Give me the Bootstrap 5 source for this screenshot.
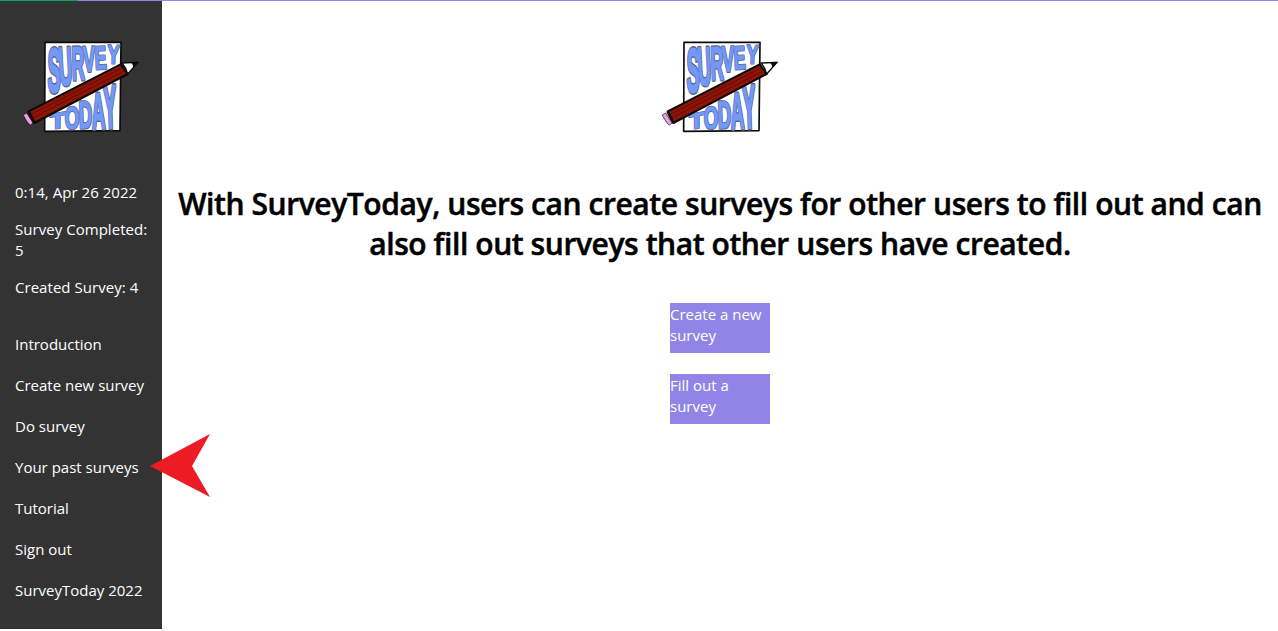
<!DOCTYPE html>
<html lang="en">
<head>
<meta charset="utf-8">
<meta name="viewport" content="width=device-width, initial-scale=1">
<title>SurveyToday</title>
<link href="https://cdn.jsdelivr.net/npm/bootstrap@5.3.0/dist/css/bootstrap.min.css" rel="stylesheet">
<style>
body{font-family:"Open Sans","Noto Sans",sans-serif;font-size:15px;line-height:21px;color:#000;overflow:hidden}
.load-track{height:1px;background:#9085e6}
.load-bar{height:1px;background:#04aa6d}
.shell{height:628px}
.side{width:162px;background:#333;color:#fff}
.brand{width:140px;height:110px;display:block}
.side .brand{margin:28.7px 0 0 11px}
.main-area{min-width:0}
.main-area .brand{margin-top:29.4px}
.stats{margin-top:42.3px;padding-left:15px;gap:16px;letter-spacing:.04px}
.menu{margin-top:36px;padding-left:15px;gap:20px}
.menu a{color:#fff;text-decoration:none;white-space:nowrap}
.headline{margin:43.6px 0 0;font-size:30px;line-height:40px;font-weight:600;white-space:nowrap;letter-spacing:-.42px;-webkit-text-stroke:.5px #000}
.actions{margin-top:39px;gap:21px}
.action{width:100px;height:50px;background:#9085e6;color:#fff;text-decoration:none;padding-top:1px}
.pointer{position:absolute;left:135px;top:-23px}
</style>
</head>
<body>
<svg width="0" height="0" class="position-absolute" aria-hidden="true">
<defs>
<g id="lettering" font-family="Liberation Sans, sans-serif" font-weight="700" font-size="100" stroke-linejoin="round">
<text transform="translate(110 185) scale(.58 1.9)">S</text>
<text transform="translate(146 166) rotate(-3) scale(.55 1.62)">U</text>
<text transform="translate(184 150) rotate(-2) scale(.53 1.42)">R</text>
<text transform="translate(217 125) rotate(-2) scale(.56 1.08)">V</text>
<text transform="translate(253 118) rotate(-3) scale(.53 .97)">E</text>
<text transform="translate(289 100) rotate(2) scale(.54 .79)">Y</text>
<text transform="translate(117 299) skewY(-10) scale(.76 .66)">T</text>
<text transform="translate(161 296) scale(.57 .93)">O</text>
<text transform="translate(205 295) rotate(-2) scale(.56 1.15)">D</text>
<text transform="translate(244 297) rotate(-2) scale(.56 1.54)">A</text>
<text transform="translate(280 295) rotate(-2) scale(.59 1.85)">Y</text>
</g>
<g id="logo">
<path d="M102 37H330L327 302L101 304Z" fill="#fff" stroke="#0b0b0b" stroke-width="5" stroke-linejoin="round"/>
<use href="#lettering" stroke="#59627c" stroke-width="8"/>
<use href="#lettering" fill="#7398fb" stroke="#7398fb" stroke-width="3"/>
<path d="M53 244L329 103L350 132L70 279Z" fill="#8d1407" stroke="#0b0b0b" stroke-width="6" stroke-linejoin="round"/>
<path d="M59 254L335 113M64 264L341 122" stroke="#4b0904" stroke-width="2" fill="none"/>
<path d="M333 99L381 97L350 132Q345 112 333 99Z" fill="#fff" stroke="#0b0b0b" stroke-width="4" stroke-linejoin="round"/>
<path d="M359 96L384 95L367 114Q366 103 359 96Z" fill="#0b0b0b"/>
<path d="M53 244L70 279" stroke="#0b0b0b" stroke-width="8"/>
<path d="M37 255L47 249L66 279L58 285Q51 283 37 255Z" fill="#f39bea" stroke="#0b0b0b" stroke-width="2" stroke-linejoin="round"/>
</g></defs>
</svg>
<div class="load-track"><div class="load-bar" style="width:6.1%"></div></div>
<div class="shell d-flex">
<aside class="side flex-shrink-0 d-flex flex-column">
<svg class="brand flex-shrink-0" viewBox="0 0 420 330" role="img" aria-label="Survey Today"><use href="#logo"/></svg>
<div class="stats d-flex flex-column">
<div>0:14, Apr 26 2022</div>
<div>Survey Completed:<br>5</div>
<div>Created Survey: 4</div>
</div>
<nav class="menu d-flex flex-column">
<a href="#">Introduction</a>
<a href="#">Create new survey</a>
<a href="#">Do survey</a>
<a href="#" class="position-relative">Your past surveys<svg class="pointer" width="60" height="64" viewBox="0 0 60 64"><path d="M0 32L60 0L42 32L60 63Z" fill="#ed1c24"/></svg></a>
<a href="#">Tutorial</a>
<a href="#">Sign out</a>
<a href="#">SurveyToday 2022</a>
</nav>
</aside>
<main class="main-area flex-grow-1 d-flex flex-column align-items-center">
<svg class="brand flex-shrink-0" viewBox="0 0 420 330" role="img" aria-label="Survey Today"><use href="#logo"/></svg>
<h1 class="headline text-center"><span>With SurveyToday, users can create surveys for other users to fill out and can</span><br><span>also fill out surveys that other users have created.</span></h1>
<div class="actions d-flex flex-column">
<a href="#" class="action">Create a new<br>survey</a>
<a href="#" class="action">Fill out a<br>survey</a>
</div>
</main>
</div>
<script src="https://cdn.jsdelivr.net/npm/bootstrap@5.3.0/dist/js/bootstrap.bundle.min.js"></script>
</body>
</html>
